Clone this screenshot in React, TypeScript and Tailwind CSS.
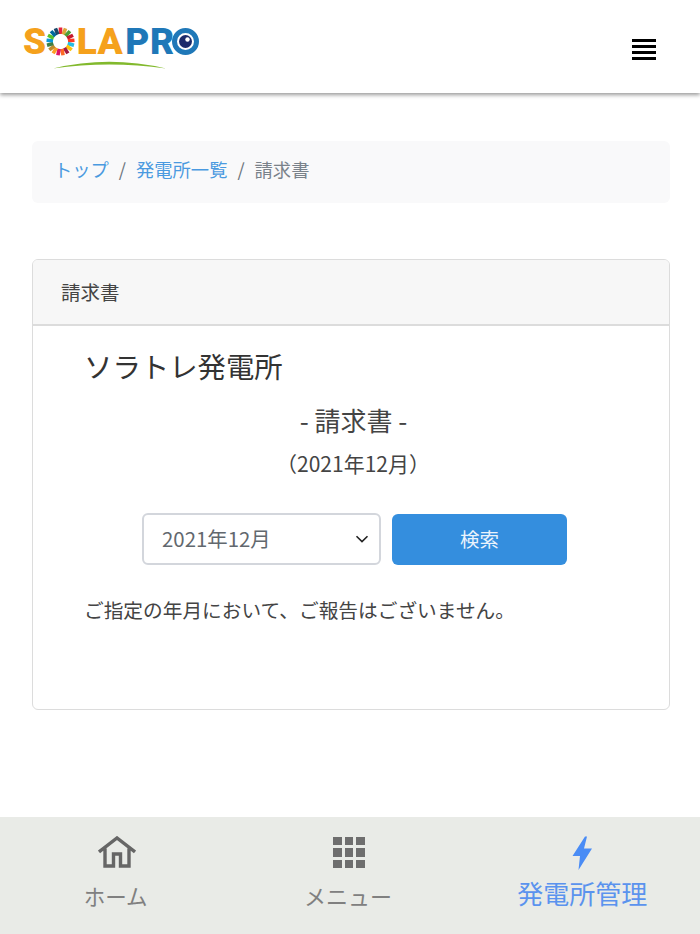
const font = { fontFamily: '"Noto Sans CJK JP", "Noto Sans", sans-serif' }

const ringColors = ['#e5243b', '#dda63a', '#4c9f38', '#c5192d', '#ff3a21', '#26bde2', '#fcc30b', '#a21942', '#fd6925', '#dd1367', '#fd9d24', '#bf8b2e', '#3f7e44', '#0a97d9', '#56c02b', '#00689d', '#19486a']

function SdgRing() {
  return (
    <svg width="29" height="29" viewBox="0 0 29 29" className="shrink-0">
      {ringColors.map((c, i) => (
        <rect key={c} x="12.7" y="0.5" width="3.6" height="6.5" fill={c} transform={`rotate(${(i * 360) / ringColors.length} 14.5 14.5)`} />
      ))}
    </svg>
  )
}

function Logo() {
  return (
    <div className="flex flex-col ml-[23px] mt-[27px] w-[176px]">
      <div className="flex items-center h-[29px] font-black text-[37px] leading-none" style={{ fontFamily: 'Roboto, sans-serif' }}>
        <span className="text-[#f5a11c] w-[23.5px]">S</span>
        <SdgRing />
        <span className="text-[#f5a11c] ml-[1.5px] w-[21px]">L</span>
        <span className="text-[#f5a11c] w-[28px]">A</span>
        <span className="text-[#1f78b8] w-[25px]">P</span>
        <span className="text-[#1f78b8] w-[22px]">R</span>
        <svg width="27" height="27" viewBox="0 0 27 27" className="shrink-0">
          <circle cx="13.5" cy="13.5" r="11" fill="#fff" stroke="#1f78b8" strokeWidth="5" />
          <circle cx="13.5" cy="13.5" r="6.5" fill="#1b2a6b" />
          <circle cx="15.5" cy="11.5" r="2.2" fill="#fff" />
        </svg>
      </div>
      <svg width="176" height="14" viewBox="0 0 176 14" className="mt-[1px]">
        <path d="M30 11.5 Q86 -2 143 11.5 Q86 3.5 30 11.5 Z" fill="#82b92d" />
      </svg>
    </div>
  )
}

export default function App() {
  return (
    <div className="flex flex-col h-[934px] bg-white overflow-hidden" style={font}>
      <header className="h-[93px] shrink-0 flex justify-between bg-white shadow-[0_2px_4px_rgba(0,0,0,0.4)]">
        <Logo />
        <div className="flex flex-col gap-[3px] mt-[39px] mr-[44px] w-6">
          <div className="h-[3px] bg-black" />
          <div className="h-[3px] bg-black" />
          <div className="h-[3px] bg-black" />
          <div className="h-[3px] bg-black" />
        </div>
      </header>

      <main className="flex-1 px-8 pt-12">
        <nav className="h-[62px] w-[638px] flex items-center gap-[10px] px-[22px] rounded-md bg-[#f9f9fa] text-[18.3px] pb-[4px]">
          <a className="text-[#4a9ae0]">トップ</a>
          <span className="text-[#6c757d]">/</span>
          <a className="text-[#4a9ae0]">発電所一覧</a>
          <span className="text-[#6c757d]">/</span>
          <span className="text-[#7a828a]">請求書</span>
        </nav>

        <section className="mt-14 h-[451px] w-[638px] rounded-md border border-[#dcdcdc] overflow-hidden">
          <div className="h-[66px] flex items-center px-[28px] pb-[1px] bg-[#f7f7f7] border-b-2 border-[#dcdcdc] text-[19.5px] text-[#444]">
            請求書
          </div>
          <div className="px-[52px]">
            <h1 className="mt-[19px] -ml-[1px] text-[28.4px] leading-[42px] text-[#333]">ソラトレ発電所</h1>
            <p className="mt-[15px] text-center text-[26px] leading-[36px] text-[#444] ml-[5px]">- 請求書 -</p>
            <p className="mt-[11px] text-center text-[21px] leading-[28px] text-[#444] ml-[4px]">（2021年12月）</p>
            <div className="mt-[36px] flex justify-center gap-[11px] ml-[7px]">
              <div className="w-[239px] h-[52px] flex items-center justify-between pl-[18px] pr-[10px] pb-[2px] rounded-md border-2 border-[#d3d6dc] bg-white text-[20.4px] text-[#62686e]">
                <span>2021年12月</span>
                <svg width="14" height="8" viewBox="0 0 14 8" fill="none" stroke="#222" strokeWidth="1.6" className="mt-[2px]">
                  <path d="M1.5 1.2 7 6.6l5.5-5.4" />
                </svg>
              </div>
              <button className="w-[175px] h-[51px] mt-px pb-[2px] rounded-md bg-[#348ede] text-[#eaf3fc] text-[19.5px]">検索</button>
            </div>
            <p className="mt-[31px] -ml-[1px] text-[19.7px] leading-[28px] text-[#444] whitespace-nowrap">ご指定の年月において、ご報告はございません。</p>
          </div>
        </section>
      </main>

      <footer className="h-[117px] shrink-0 grid grid-cols-3 bg-[#e9ebe7] text-[#808080]">
        <div className="flex flex-col items-center pt-[19px]">
          <svg width="38" height="32" viewBox="0 0 38 32" fill="none" stroke="#666" strokeWidth="3.4">
            <path d="M1 16 19 2l18 14M7 12.5V30h8.5V18h7v12H31V12.5" />
          </svg>
          <span className="mt-[13px] -ml-[2px] text-[21.5px] leading-[30px]">ホーム</span>
        </div>
        <div className="flex flex-col items-center pt-[20px] -ml-[2px]">
          <div className="grid grid-cols-3 gap-[3px] w-[32px] h-[31px]">
            {Array.from({ length: 9 }).map((_, i) => (
              <div key={i} className="bg-[#6e6e6e]" />
            ))}
          </div>
          <span className="mt-[12px] -ml-[2px] text-[22px] leading-[30px]">メニュー</span>
        </div>
        <div className="flex flex-col items-center pt-[19px] -ml-[2px]">
          <svg width="20" height="34" viewBox="0 0 20 34" fill="#4a8cf5">
            <path d="M13 0.5 0.5 20H8L6.5 34 20 12.5h-8l3-12Z" />
          </svg>
          <span className="mt-[5px] text-[26px] leading-[36px] text-[#5b93ee]">発電所管理</span>
        </div>
      </footer>
    </div>
  )
}
